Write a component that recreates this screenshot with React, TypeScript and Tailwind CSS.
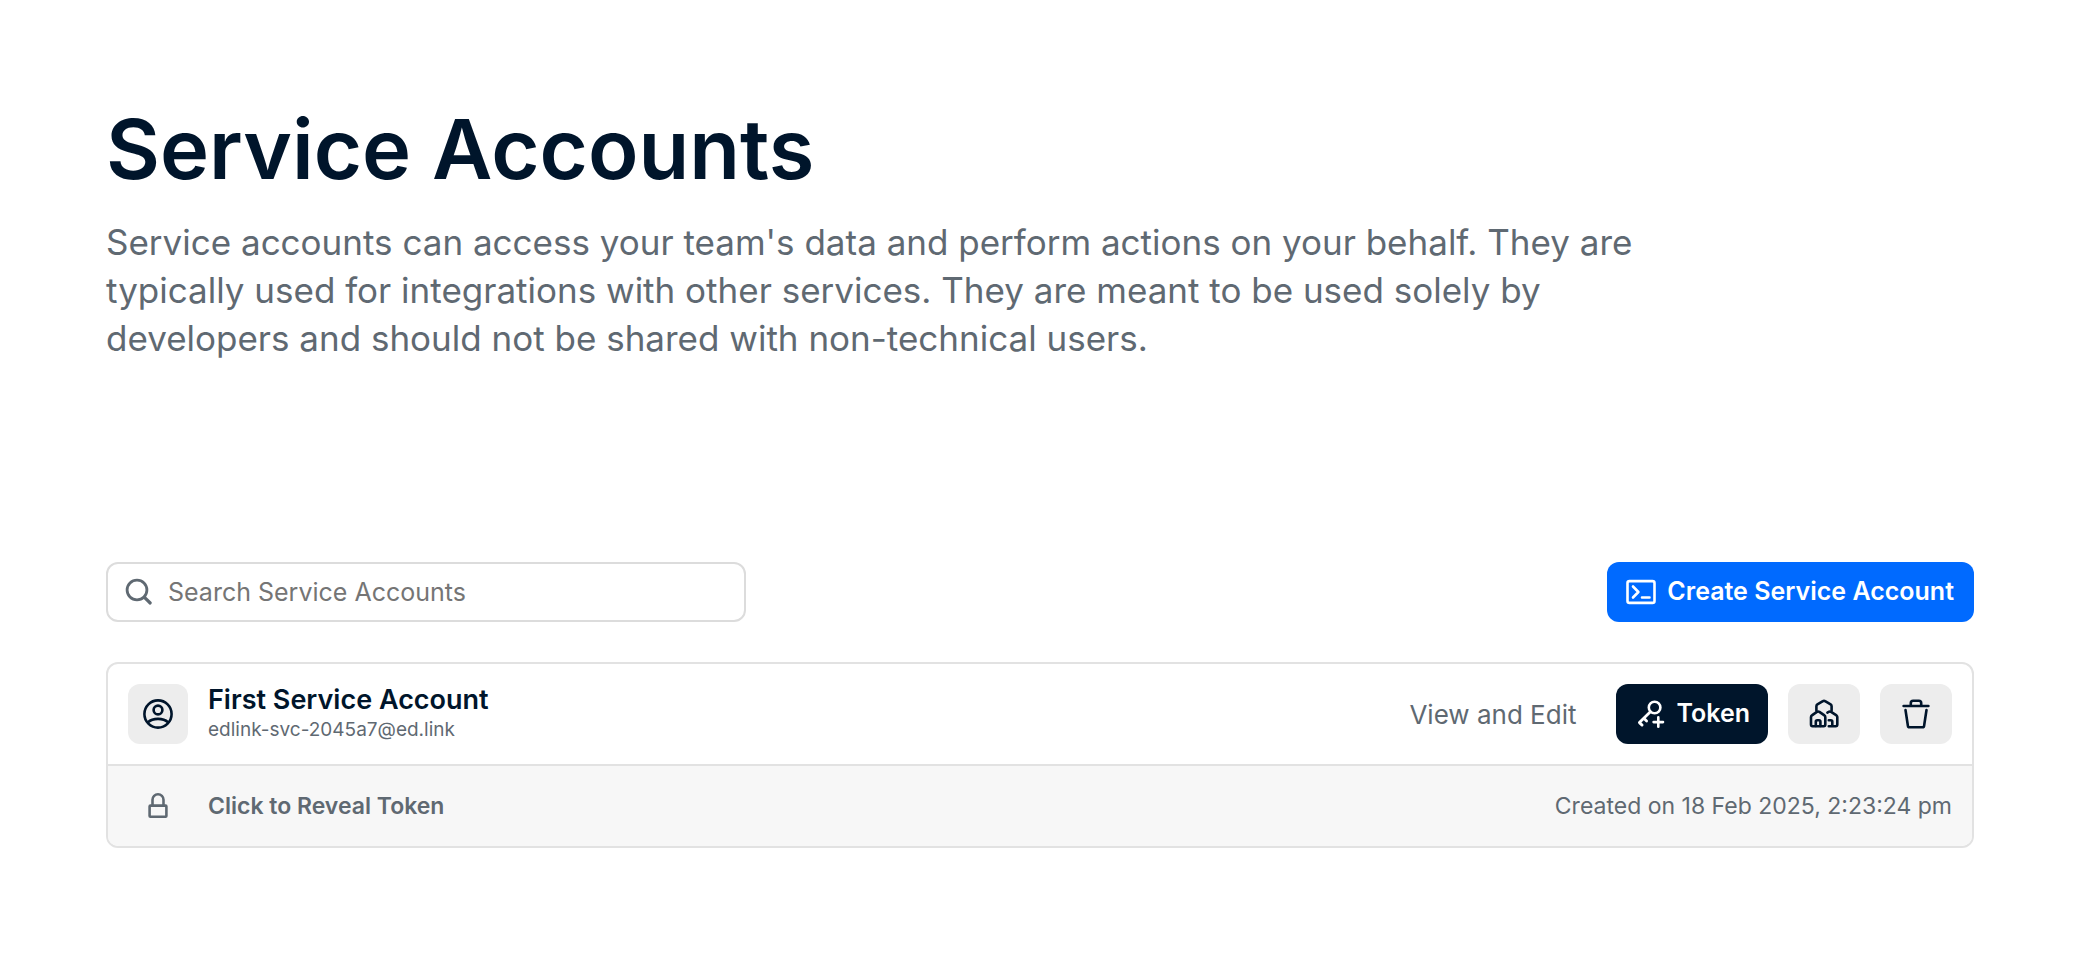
import type { ReactNode } from "react";

function Icon({ children, className = "" }: { children: ReactNode; className?: string }) {
  return (
    <svg
      viewBox="0 0 32 32"
      fill="none"
      stroke="currentColor"
      strokeWidth="2.6"
      strokeLinecap="round"
      strokeLinejoin="round"
      aria-hidden="true"
      className={`w-8 h-8 shrink-0 ${className}`}
    >
      {children}
    </svg>
  );
}

const SearchIcon = () => (
  <Icon className="text-[#5f6972]">
    <circle cx="15" cy="14" r="9.9" strokeWidth="2.8" />
    <path d="M22.2 21.2 28.2 27" strokeWidth="3.2" />
  </Icon>
);

const TerminalIcon = () => (
  <Icon>
    <rect x="2.5" y="5.1" width="27" height="21.8" rx="2" />
    <path d="m8 10.5 5.4 5.5L8 21.5M17 21.5h7.5" />
  </Icon>
);

const UserIcon = () => (
  <Icon>
    <circle cx="16" cy="16" r="13.6" />
    <circle cx="16" cy="12" r="4.4" />
    <path d="M6 24.2c2.6-2.4 6-3.3 10-3.3s7.4.9 10 3.3" />
  </Icon>
);

const LockIcon = () => (
  <Icon>
    <rect x="7.6" y="15.6" width="16.8" height="11.2" rx="0.8" />
    <path d="M10.5 15.2V9.8a5.5 5.5 0 0 1 11 0v5.4" />
  </Icon>
);

const KeyIcon = () => (
  <Icon>
    <circle cx="18.6" cy="9.5" r="5.8" />
    <path d="M14.4 13.7 3.4 24.6l2.7 2.5M7.8 20.3l2.8 2.7" strokeWidth="2.8" />
    <path d="M22.3 19.4v9.4M17.6 24.1H27" />
  </Icon>
);

const SchoolsIcon = () => (
  <Icon>
    <path d="M8.4 12.5V8.2c0-.8.4-1.4 1-1.8l5.5-3.2a2 2 0 0 1 2.2 0l5.5 3.2c.6.4 1 1 1 1.8v4.3" />
    <path d="M4.6 28.3h11c1 0 1.7-.7 1.7-1.7v-7.4c0-.7-.3-1.4-.9-1.8l-5-3.5a2.200 2.200 0 0 0-2.500 0l-5 3.500c-.6.4-.9 1.100-.9 1.800v7.400c0 1 .7 1.700 1.600 1.700Z" />
    <path d="M7.8 28v-4.2c0-.9.6-1.5 1.4-1.5H11c.8 0 1.4.6 1.4 1.5V28" />
    <path d="m19.4 14.6 1.200-.7a2.200 2.200 0 0 1 2.500 0l5.400 3.500c.5.4.8 1 .8 1.700v7.500c0 1-.7 1.700-1.600 1.700h-6.900M20.800 22.300h2c.9 0 1.500.6 1.500 1.500V28" />
  </Icon>
);

const TrashIcon = () => (
  <Icon>
    <path d="M3.6 8h24.8M10.8 7.4V5c0-1.500.9-2.300 2.300-2.300h5.800c1.400 0 2.300.8 2.300 2.300v2.400" />
    <path d="m5.500 12 2.400 15.800c.1.900.7 1.500 1.700 1.500h12.800c1 0 1.600-.6 1.700-1.500L26.500 12" />
  </Icon>
);

const accounts = [
  {
    name: "First Service Account",
    email: "edlink-svc-2045a7@ed.link",
    created: "Created on 18 Feb 2025, 2:23:24 pm"
  }
];

export default function App() {
  return (
    <main className="bg-white pl-[106px] pr-28 pt-[100px] pb-20 font-['Inter',sans-serif] text-[#00152b]">
      <h1 className="text-[83px] leading-[98px] font-semibold">Service Accounts</h1>
      <p className="mt-5 max-w-[1600px] text-[35px] leading-[48px] text-[#5f6972]">
        Service accounts can access your team's data and perform actions on your behalf. They are typically used for
        integrations with other services. They are meant to be used solely by developers and should not be shared with
        non-technical users.
      </p>

      <div className="mt-[200px] flex items-center justify-between">
        <label className="flex h-[60px] w-[640px] items-center gap-3.5 rounded-xl border-2 border-[#dcdcdc] px-3.5">
          <SearchIcon />
          <input
            type="text"
            aria-label="Search Service Accounts"
            placeholder="Search Service Accounts"
            className="w-full pt-px text-[25px] outline-none placeholder:text-[#757575]"
          />
        </label>
        <button className="flex h-[60px] items-center gap-2.5 rounded-xl bg-[#006aff] pl-[18px] pr-5 text-[25px] font-semibold whitespace-nowrap text-white">
          <TerminalIcon />
          Create Service Account
        </button>
      </div>

      {accounts.map((a) => (
        <section key={a.email} className="mt-10 overflow-hidden rounded-xl border-2 border-[#e2e2e2]">
          <div className="flex items-center gap-5 p-5">
            <div className="flex h-[60px] w-[60px] items-center justify-center rounded-xl bg-[#ededed]">
              <UserIcon />
            </div>
            <div className="flex-1">
              <h2 className="text-[27px] leading-8 font-semibold">{a.name}</h2>
              <p className="text-[19px] leading-7 text-[#5f6972]">{a.email}</p>
            </div>
            <a href="#edit" className="mr-5 text-[26px] text-[#5f6972]">
              View and Edit
            </a>
            <button className="flex h-[60px] items-center gap-2 rounded-xl bg-[#00152b] pl-5 pr-[18px] text-[25px] font-semibold text-white">
              <KeyIcon />
              Token
            </button>
            <button aria-label="Schools" className="flex h-[60px] w-[72px] items-center justify-center rounded-xl bg-[#ededed]">
              <SchoolsIcon />
            </button>
            <button aria-label="Delete" className="flex h-[60px] w-[72px] items-center justify-center rounded-xl bg-[#ededed]">
              <TrashIcon />
            </button>
          </div>
          <div className="flex h-[82px] items-center justify-between border-t-2 border-[#e2e2e2] bg-[#f7f7f7] px-5 text-[23px] text-[#5f6972]">
            <button className="flex items-center gap-5 font-semibold">
              <span className="flex w-[60px] justify-center">
                <LockIcon />
              </span>
              Click to Reveal Token
            </button>
            <span>{a.created}</span>
          </div>
        </section>
      ))}
    </main>
  );
}
